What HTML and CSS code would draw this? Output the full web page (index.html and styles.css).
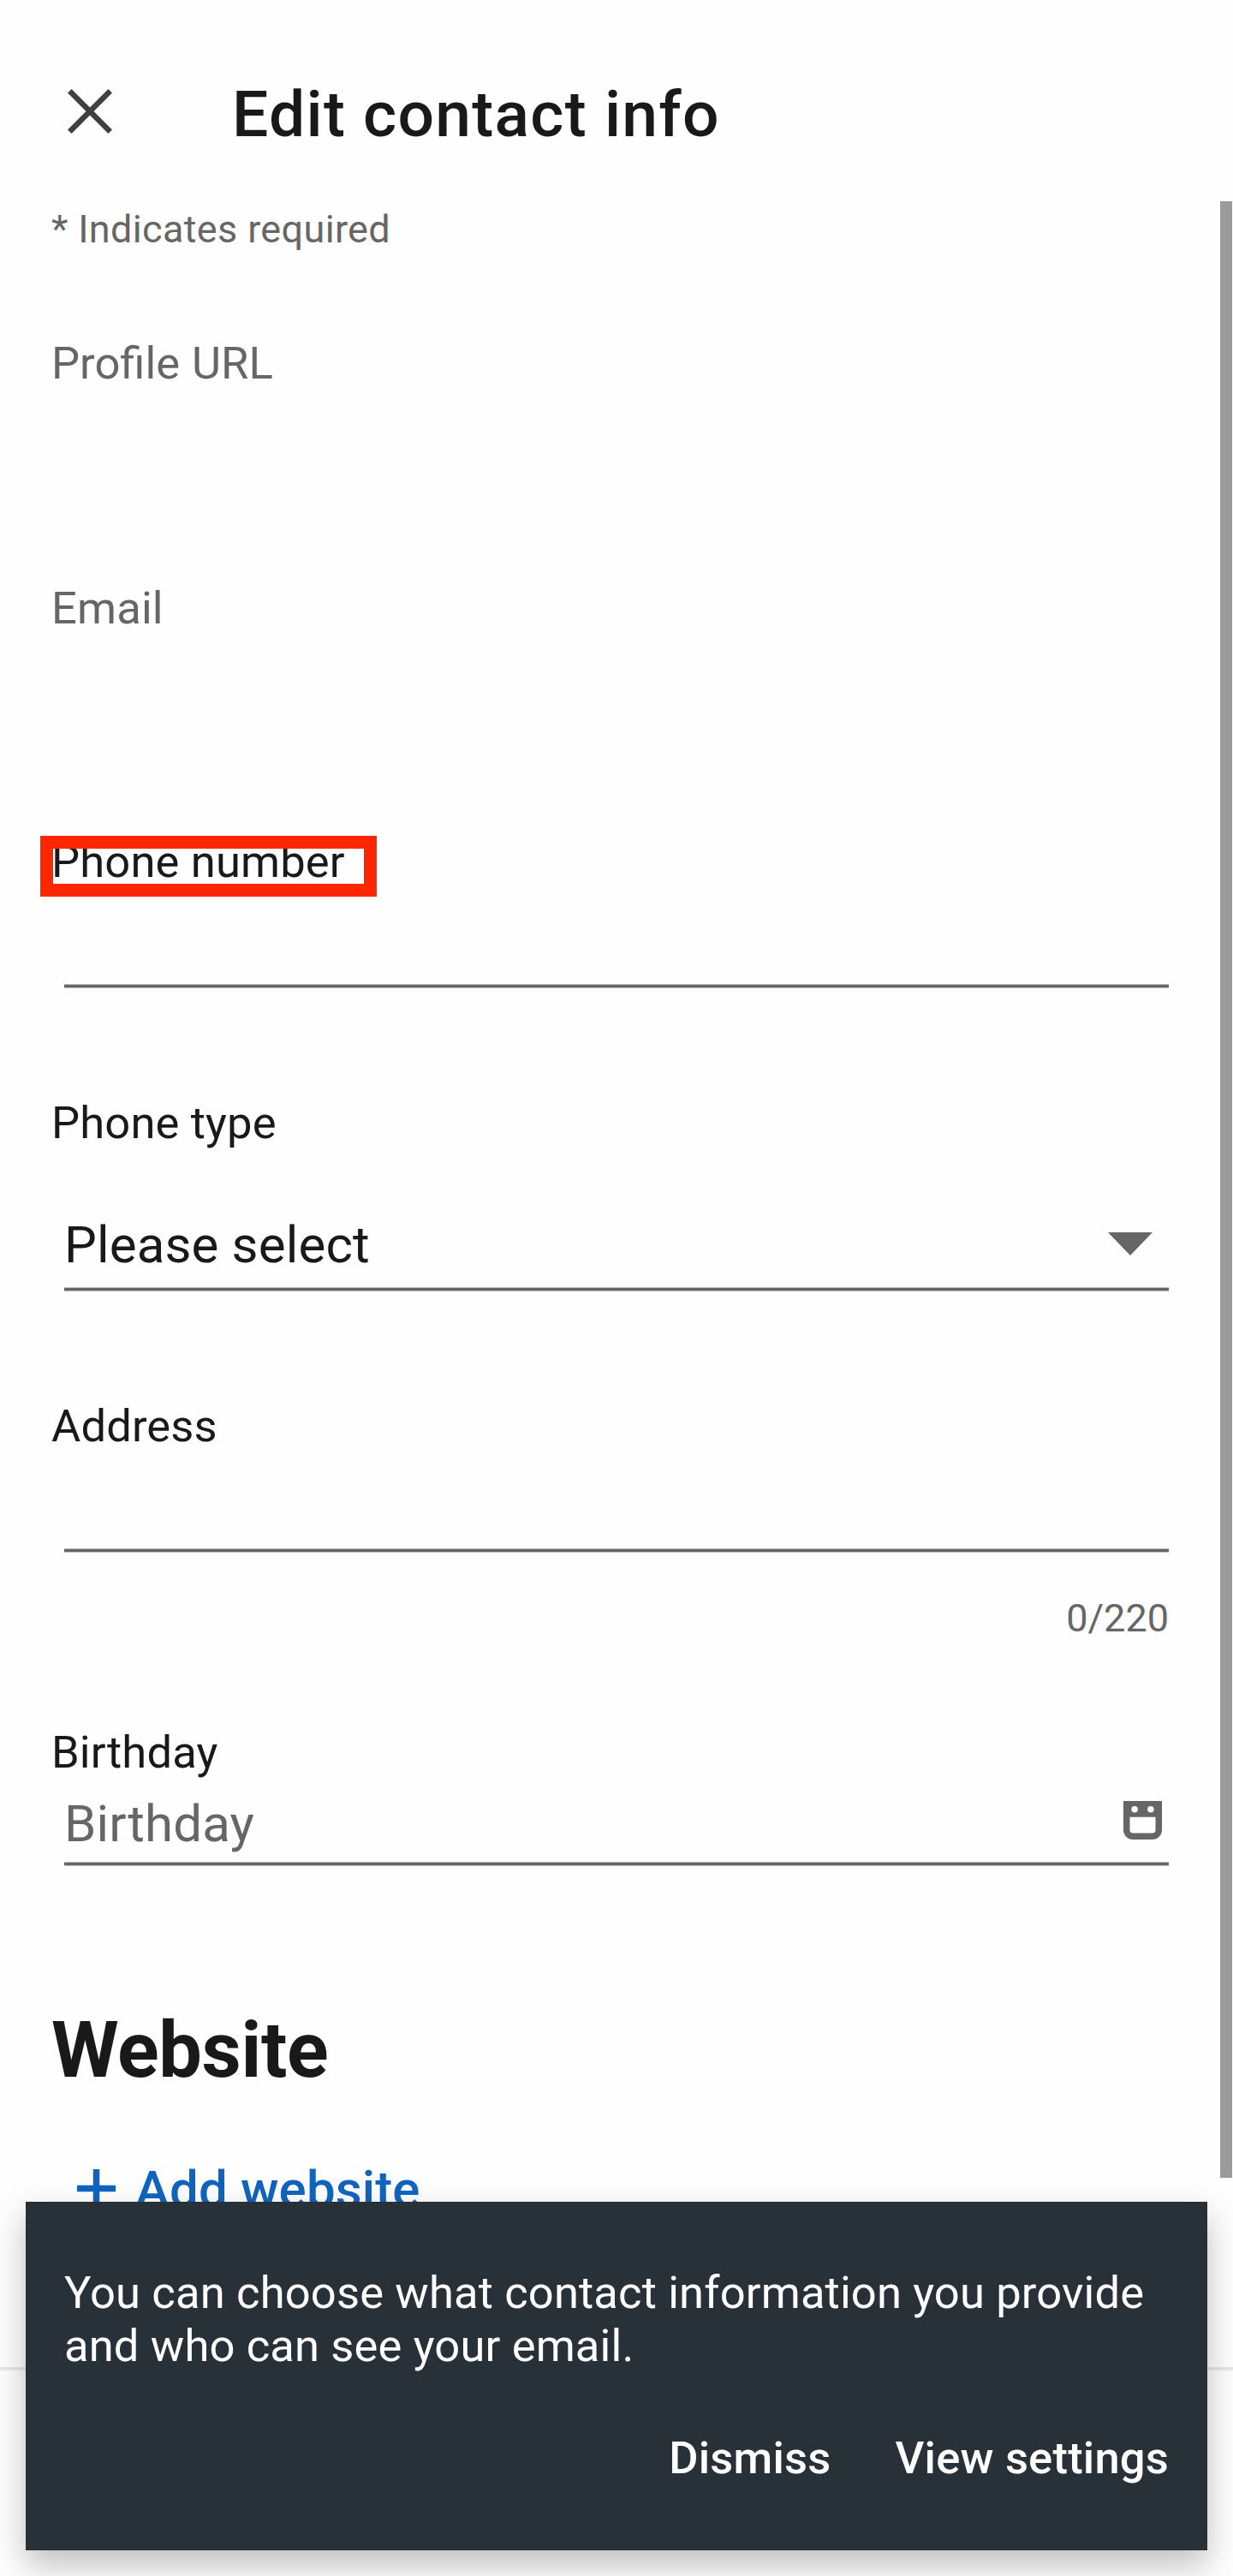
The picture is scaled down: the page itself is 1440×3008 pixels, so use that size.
FILE: index.html
```html
<!DOCTYPE html>
<html lang="en">
<head>
<meta charset="utf-8">
<title>Edit contact info</title>
<link rel="stylesheet" href="styles.css">
</head>
<body>
<div class="screen">
  <header class="header">
    <svg class="close" viewBox="0 0 52 52" role="img" aria-label="Close"><path d="M2.3 2.3 49.7 49.7M49.7 2.3 2.3 49.7"/></svg>
    <h1 class="title">Edit contact info</h1>
  </header>
  <main class="form">
    <p class="hint">* Indicates required</p>
    <section class="field field-url"><span class="label muted">Profile URL</span></section>
    <section class="field field-email"><span class="label muted">Email</span></section>
    <section class="field field-phone">
      <span class="label"><span class="highlighted">Phone number</span></span>
      <div class="input"></div>
    </section>
    <section class="field field-type">
      <span class="label">Phone type</span>
      <div class="input"><span class="value">Please select</span>
        <svg class="arrow" viewBox="0 0 52 27"><path d="M0 0h52L26 27z"/></svg>
      </div>
    </section>
    <section class="field field-address">
      <span class="label">Address</span>
      <div class="input"></div>
      <span class="counter">0/220</span>
    </section>
    <section class="field field-birthday">
      <span class="label">Birthday</span>
      <div class="input"><span class="value muted">Birthday</span>
        <svg class="calendar" viewBox="0 0 12 12"><path fill-rule="evenodd" d="M0 0h12v9a3 3 0 0 1-3 3H3a3 3 0 0 1-3-3zM2 5v4a1 1 0 0 0 1 1h6a1 1 0 0 0 1-1V5zM3.5 1.6a1 1 0 1 0 0 2 1 1 0 0 0 0-2zM8.5 1.6a1 1 0 1 0 0 2 1 1 0 0 0 0-2z"/></svg>
      </div>
    </section>
    <h2 class="section-title">Website</h2>
    <div class="add"><svg class="plus" viewBox="0 0 12 12"><path d="M6 0v12M0 6h12"/></svg><span>Add website</span></div>
  </main>
  <footer class="footer"></footer>
  <div class="scrollbar"></div>
  <aside class="snackbar">
    <p class="message">You can choose what contact information you provide and who can see your email.</p>
    <div class="actions"><span>Dismiss</span><span>View settings</span></div>
  </aside>
</div>
</body>
</html>
```
FILE: styles.css
```css
*, *::after { box-sizing: border-box; }

body {
  margin: 0;
  background: #fefefe;
  color: #191919;
  font-family: Roboto, sans-serif;
}

h1, h2, p { margin: 0; }

.screen {
  position: relative;
  display: flex;
  flex-direction: column;
  height: 3008px;
  overflow: hidden;
}

.header {
  display: flex;
  align-items: flex-start;
  flex: none;
  height: 235px;
  padding: 89px 60px 0 79px;
}

.close {
  width: 52px;
  height: 52px;
  margin-top: 15px;
  fill: none;
  stroke: #404040;
  stroke-width: 6.5;
}

.title {
  margin-left: 140px;
  font-size: 75px;
  font-weight: 500;
  line-height: 88px;
  letter-spacing: 1.28px;
}

.form {
  display: flex;
  flex-direction: column;
  flex: none;
  height: 2529px;
  padding: 6px 75px 0 60px;
}

.hint {
  height: 152px;
  color: #666;
  font-size: 45px;
  line-height: 54px;
  letter-spacing: .35px;
}

.field {
  display: flex;
  flex-direction: column;
  flex: none;
}

.field-url { height: 286px; }
.field-email { height: 296px; }
.field-phone { height: 305px; }
.field-type { height: 354px; }
.field-address { height: 381px; }
.field-birthday { height: 325px; }

.label {
  font-size: 52.5px;
  line-height: 62px;
  letter-spacing: .15px;
}

/* Normal spacing keeps the "fi" ligature */
.field-url .label {
  letter-spacing: normal;
  word-spacing: 1px;
}

.muted { color: #666; }

.highlighted { position: relative; }

.highlighted::after {
  content: "";
  position: absolute;
  top: 1px;
  left: -13px;
  width: 393px;
  height: 71px;
  border: 15px solid #ff2600;
}

.input {
  display: flex;
  justify-content: space-between;
  align-items: flex-start;
  margin-left: 15px;
  background: linear-gradient(#bbb 0 1px, #666 1px 4px, #bbb 4px) bottom / 100% 5px no-repeat;
}

.field-phone .input,
.field-address .input { height: 117px; }
.field-type .input { height: 166px; padding-top: 77px; }
.field-birthday .input { height: 102px; padding-top: 18px; }

.value {
  font-size: 60px;
  line-height: 70px;
  letter-spacing: .15px;
}

.arrow {
  width: 52px;
  height: 27px;
  margin: 20px 19px 0 0;
  fill: #666;
}

.calendar {
  width: 45px;
  height: 45px;
  margin: 8px 8px 0 0;
  fill: #666;
}

.counter {
  margin-top: 50px;
  color: #666;
  font-size: 45px;
  line-height: 54px;
  text-align: right;
}

.section-title {
  padding-top: 2px;
  font-size: 90px;
  font-weight: 700;
  line-height: 106px;
  letter-spacing: -.35px;
}

.add {
  display: flex;
  align-items: center;
  gap: 23px;
  margin: 74px 0 0 30px;
  color: #0f65be;
  font-size: 60px;
  font-weight: 500;
  line-height: 70px;
  letter-spacing: .15px;
}

.plus {
  width: 45px;
  height: 45px;
  margin-top: -4px;
  fill: none;
  stroke: currentColor;
  stroke-width: 2;
}

.footer {
  flex: 1;
  border-top: 4px solid #e8e8e8;
}

.scrollbar {
  position: absolute;
  top: 235px;
  right: 1px;
  width: 14px;
  height: 2308px;
  background: #9b9b9b;
}

.snackbar {
  position: absolute;
  top: 2571px;
  left: 30px;
  width: 1380px;
  height: 407px;
  padding: 75px 45px 0;
  background: #293138;
  color: #fff;
  font-size: 52.5px;
  line-height: 62px;
  box-shadow: 0 17px 36px rgba(0, 0, 0, .25);
}

.message {
  margin-right: -20px;
  letter-spacing: .15px;
}

.actions {
  display: flex;
  justify-content: flex-end;
  gap: 75px;
  margin-top: 69px;
  font-weight: 500;
  letter-spacing: .2px;
}
```
